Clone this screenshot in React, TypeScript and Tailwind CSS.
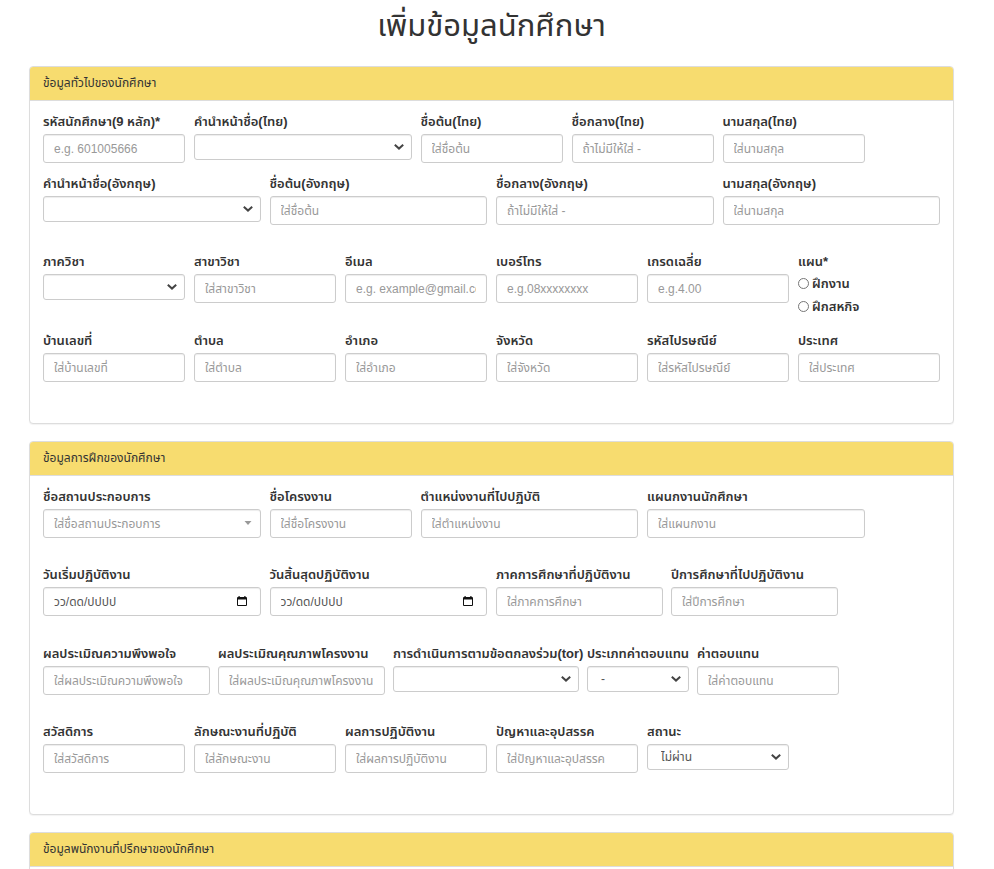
import React, { useId } from "react";
import type { ReactNode } from "react";

const control =
  "block w-full rounded-[3px] border border-[#ccc] bg-white text-[12px] text-[#555] shadow-[inset_0_1px_1px_rgba(0,0,0,0.075)] outline-none focus:border-[#66afe9]";

const labelText = "block whitespace-nowrap text-[13px] leading-5 font-semibold text-[#333]";

function TextField({ label, hint, className }: { label: string; hint: string; className: string }) {
  const id = useId();
  return (
    <div className={className}>
      <label htmlFor={id} className={`${labelText} mb-[2px]`}>
        {label}
      </label>
      <input id={id} type="text" placeholder={hint} className={`${control} h-[29px] px-[10px] placeholder:text-[#999]`} />
    </div>
  );
}

function SelectField({ label, value = "", className }: { label: string; value?: string; className: string }) {
  const id = useId();
  return (
    <div className={className}>
      <label htmlFor={id} className={`${labelText} mb-[2px]`}>
        {label}
      </label>
      <div className="relative">
        <select id={id} className={`${control} h-[26px] appearance-none pr-6 pl-[13px]`}>
          <option>{value}</option>
        </select>
        <svg viewBox="0 0 10 6" className="pointer-events-none absolute top-[10px] right-2 h-[6px] w-[10px]" fill="none" stroke="#444" strokeWidth="2">
          <path d="M0.8 0.8 5 4.6 9.2 0.8" />
        </svg>
      </div>
    </div>
  );
}

function ComboField({ label, hint, className }: { label: string; hint: string; className: string }) {
  const id = useId();
  return (
    <div className={className}>
      <label htmlFor={id} className={`${labelText} mb-[2px]`}>
        {label}
      </label>
      <div className="relative">
        <select id={id} className={`${control} h-[29px] appearance-none pr-6 pl-[10px] text-[#999]`}>
          <option>{hint}</option>
        </select>
        <svg viewBox="0 0 8 4" className="pointer-events-none absolute top-[12px] right-[9px] h-1 w-2" fill="#999">
          <path d="M0.5 0h7L4 4z" />
        </svg>
      </div>
    </div>
  );
}

function DateField({ label, className }: { label: string; className: string }) {
  const id = useId();
  return (
    <div className={className}>
      <label htmlFor={id} className={`${labelText} mb-[2px]`}>
        {label}
      </label>
      <div className="relative">
        <input id={id} type="text" placeholder="วว/ดด/ปปปป" className={`${control} h-[29px] pr-8 pl-[10px] placeholder:text-[#555]`} />
        <button type="button" aria-label="เปิดปฏิทิน" className="absolute top-[9px] right-[14px] h-[11px] w-[10px]">
          <svg viewBox="0 0 10 11" className="block h-[11px] w-[10px]">
            <path fill="#111" d="M1.5 0h1.2v1h4.6V0h1.2v1H9a1 1 0 0 1 1 1v7a1 1 0 0 1-1 1H1a1 1 0 0 1-1-1V2a1 1 0 0 1 1-1h.5zM1 3.5V9h8V3.5z" />
          </svg>
        </button>
      </div>
    </div>
  );
}

function Panel({ title, children }: { title: string; children?: ReactNode }) {
  return (
    <section className="mb-[17px] rounded-[4px] border border-[#ddd] bg-white shadow-[0_1px_1px_rgba(0,0,0,0.05)]">
      <h2 className="h-[34px] rounded-t-[3px] border-b border-[#ddd] bg-[#f7dc6f] px-[13px] text-[12px] leading-[33px] text-[#333]">{title}</h2>
      <div className="px-[13px] pt-[11px] pb-[41px]">{children}</div>
    </section>
  );
}

const row = "grid grid-cols-12 items-start gap-x-[9px]";

export default function App() {
  return (
    <main className="min-h-screen bg-white pr-10 pl-[29px] font-['Liberation_Sans','Noto_Sans_Thai',Tahoma,sans-serif]">
      <h1 className="mb-[16px] pt-[2px] text-center text-[31px] leading-[48px] text-[#333]">เพิ่มข้อมูลนักศึกษา</h1>
      <form>
        <Panel title="ข้อมูลทั่วไปของนักศึกษา">
          <div className={row}>
            <TextField className="col-span-2" label="รหัสนักศึกษา(9 หลัก)*" hint="e.g. 601005666" />
            <SelectField className="col-span-3" label="คำนำหน้าชื่อ(ไทย)" />
            <TextField className="col-span-2" label="ชื่อต้น(ไทย)" hint="ใส่ชื่อต้น" />
            <TextField className="col-span-2" label="ชื่อกลาง(ไทย)" hint="ถ้าไม่มีให้ใส่ -" />
            <TextField className="col-span-2" label="นามสกุล(ไทย)" hint="ใส่นามสกุล" />
          </div>
          <div className={`${row} mt-[11px]`}>
            <SelectField className="col-span-3" label="คำนำหน้าชื่อ(อังกฤษ)" />
            <TextField className="col-span-3" label="ชื่อต้น(อังกฤษ)" hint="ใส่ชื่อต้น" />
            <TextField className="col-span-3" label="ชื่อกลาง(อังกฤษ)" hint="ถ้าไม่มีให้ใส่ -" />
            <TextField className="col-span-3" label="นามสกุล(อังกฤษ)" hint="ใส่นามสกุล" />
          </div>
          <div className={`${row} mt-[27px]`}>
            <SelectField className="col-span-2" label="ภาควิชา" />
            <TextField className="col-span-2" label="สาขาวิชา" hint="ใส่สาขาวิชา" />
            <TextField className="col-span-2" label="อีเมล" hint="e.g. example@gmail.com" />
            <TextField className="col-span-2" label="เบอร์โทร" hint="e.g.08xxxxxxxx" />
            <TextField className="col-span-2" label="เกรดเฉลี่ย" hint="e.g.4.00" />
            <fieldset className="col-span-2 text-[13px] font-semibold text-[#333]">
              <legend className={labelText}>แผน*</legend>
              <label className="flex h-[23px] items-center gap-[3px]">
                <input type="radio" name="plan" className="size-[11px] appearance-none rounded-full border border-[#767676] checked:border-4" />
                ฝึกงาน
              </label>
              <label className="flex h-[23px] items-center gap-[3px]">
                <input type="radio" name="plan" className="size-[11px] appearance-none rounded-full border border-[#767676] checked:border-4" />
                ฝึกสหกิจ
              </label>
            </fieldset>
          </div>
          <div className={`${row} mt-[13px]`}>
            <TextField className="col-span-2" label="บ้านเลขที่" hint="ใส่บ้านเลขที่" />
            <TextField className="col-span-2" label="ตำบล" hint="ใส่ตำบล" />
            <TextField className="col-span-2" label="อำเภอ" hint="ใส่อำเภอ" />
            <TextField className="col-span-2" label="จังหวัด" hint="ใส่จังหวัด" />
            <TextField className="col-span-2" label="รหัสไปรษณีย์" hint="ใส่รหัสไปรษณีย์" />
            <TextField className="col-span-2" label="ประเทศ" hint="ใส่ประเทศ" />
          </div>
        </Panel>

        <Panel title="ข้อมูลการฝึกของนักศึกษา">
          <div className={row}>
            <ComboField className="col-span-3" label="ชื่อสถานประกอบการ" hint="ใส่ชื่อสถานประกอบการ" />
            <TextField className="col-span-2" label="ชื่อโครงงาน" hint="ใส่ชื่อโครงงาน" />
            <TextField className="col-span-3" label="ตำแหน่งงานที่ไปปฏิบัติ" hint="ใส่ตำแหน่งงาน" />
            <TextField className="col-span-3" label="แผนกงานนักศึกษา" hint="ใส่แผนกงาน" />
          </div>
          <div className={`${row} mt-[27px]`}>
            <DateField className="col-span-3" label="วันเริ่มปฏิบัติงาน" />
            <DateField className="col-span-3" label="วันสิ้นสุดปฏิบัติงาน" />
            <div className="col-span-6 flex gap-2">
              <TextField className="w-[167px]" label="ภาคการศึกษาที่ปฏิบัติงาน" hint="ใส่ภาคการศึกษา" />
              <TextField className="w-[167px]" label="ปีการศึกษาที่ไปปฏิบัติงาน" hint="ใส่ปีการศึกษา" />
            </div>
          </div>
          <div className="mt-[28px] flex items-start gap-2">
            <TextField className="w-[167px]" label="ผลประเมิณความพึงพอใจ" hint="ใส่ผลประเมิณความพึงพอใจ" />
            <TextField className="w-[167px]" label="ผลประเมิณคุณภาพโครงงาน" hint="ใส่ผลประเมิณคุณภาพโครงงาน" />
            <SelectField className="w-[186px]" label="การดำเนินการตามข้อตกลงร่วม(tor)" />
            <SelectField className="w-[102px]" label="ประเภทค่าตอบแทน" value="-" />
            <TextField className="w-[142px]" label="ค่าตอบแทน" hint="ใส่ค่าตอบแทน" />
          </div>
          <div className={`${row} mt-[27px]`}>
            <TextField className="col-span-2" label="สวัสดิการ" hint="ใส่สวัสดิการ" />
            <TextField className="col-span-2" label="ลักษณะงานที่ปฏิบัติ" hint="ใส่ลักษณะงาน" />
            <TextField className="col-span-2" label="ผลการปฏิบัติงาน" hint="ใส่ผลการปฏิบัติงาน" />
            <TextField className="col-span-2" label="ปัญหาและอุปสรรค" hint="ใส่ปัญหาและอุปสรรค" />
            <SelectField className="col-span-2" label="สถานะ" value="ไม่ผ่าน" />
          </div>
        </Panel>

        <Panel title="ข้อมูลพนักงานที่ปรึกษาของนักศึกษา" />
      </form>
    </main>
  );
}
